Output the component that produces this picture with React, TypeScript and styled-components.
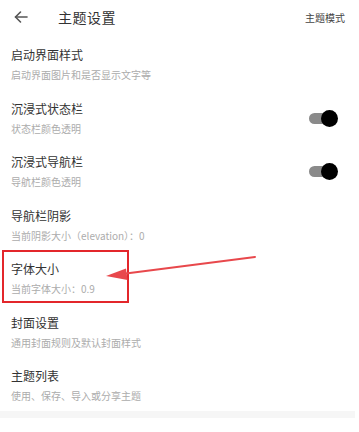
import React from "react";
import styled, { createGlobalStyle } from "styled-components";

const Global = createGlobalStyle`
  html, body { margin: 0; padding: 0; background: #fff; }
  body { font-family: "Noto Sans CJK SC", "Noto Sans", sans-serif; }
`;

const Page = styled.div`
  position: relative;
  width: 359px;
  height: 432px;
  overflow: hidden;
  background: #fff;
`;

const Header = styled.div`
  height: 34px;
  display: flex;
  align-items: center;
  padding: 0 0 0 12px;
`;

const BackBtn = styled.div`
  width: 18px;
  height: 18px;
  display: flex;
  align-items: center;
  justify-content: center;
  color: #555;
`;

const Title = styled.div`
  margin-left: 28px;
  font-size: 14px;
  color: #333;
  flex: 1;
  letter-spacing: 0.5px;
`;

const Action = styled.div`
  font-size: 10px;
  color: #444;
  margin-right: 14px;
`;

const List = styled.div`
  display: flex;
  flex-direction: column;
`;

const Item = styled.div`
  height: 53.5px;
  box-sizing: border-box;
  padding: 13px 21px 0 11px;
  display: flex;
  align-items: flex-start;
`;

const Texts = styled.div`
  flex: 1;
  display: flex;
  flex-direction: column;
  gap: 5px;
`;

const ItemTitle = styled.div`
  font-size: 12px;
  line-height: 16px;
  color: #333;
`;

const ItemSub = styled.div`
  font-size: 10px;
  line-height: 14px;
  color: #acacac;
`;

const SwitchWrap = styled.div`
  position: relative;
  width: 29px;
  height: 17px;
  margin-top: 9px;
`;

const Track = styled.div`
  position: absolute;
  left: 0;
  top: 3px;
  width: 24px;
  height: 11px;
  border-radius: 6px;
  background: #8a8a8a;
`;

const Thumb = styled.div`
  position: absolute;
  right: 0;
  top: 0;
  width: 17px;
  height: 17px;
  border-radius: 50%;
  background: #000;
`;

const Band = styled.div`
  margin-top: 2.5px;
  height: 7px;
  width: 355px;
  background: #f6f6f6;
`;

const Highlight = styled.div`
  position: absolute;
  left: 2px;
  top: 250px;
  width: 123px;
  height: 49px;
  border: 2px solid #e3262b;
`;

const Arrow = styled.svg`
  position: absolute;
  left: 0;
  top: 0;
  pointer-events: none;
`;

const items = [
  { t: "启动界面样式", s: "启动界面图片和是否显示文字等" },
  { t: "沉浸式状态栏", s: "状态栏颜色透明", sw: true },
  { t: "沉浸式导航栏", s: "导航栏颜色透明", sw: true },
  { t: "导航栏阴影", s: "当前阴影大小（elevation）：0" },
  { t: "字体大小", s: "当前字体大小：0.9" },
  { t: "封面设置", s: "通用封面规则及默认封面样式" },
  { t: "主题列表", s: "使用、保存、导入或分享主题" },
];

export default function App() {
  return (
    <Page>
      <Global />
      <Header>
        <BackBtn>
          <svg width="16" height="16" viewBox="0 0 16 16" fill="none" stroke="#555" strokeWidth="1.6" strokeLinecap="round" strokeLinejoin="round">
            <path d="M14 8H2.5" />
            <path d="M7.5 3L2.5 8l5 5" />
          </svg>
        </BackBtn>
        <Title>主题设置</Title>
        <Action>主题模式</Action>
      </Header>
      <List>
        {items.map((it) => (
          <Item key={it.t}>
            <Texts>
              <ItemTitle>{it.t}</ItemTitle>
              <ItemSub>{it.s}</ItemSub>
            </Texts>
            {it.sw && (
              <SwitchWrap>
                <Track />
                <Thumb />
              </SwitchWrap>
            )}
          </Item>
        ))}
      </List>
      <Band />
      <Highlight />
      <Arrow width="359" height="432" viewBox="0 0 359 432">
        <line x1="255" y1="257" x2="122" y2="274" stroke="#e8484c" strokeWidth="2" strokeLinecap="round" />
        <polygon points="106,276 126,268.5 127.5,280" fill="#e8484c" />
      </Arrow>
    </Page>
  );
}
